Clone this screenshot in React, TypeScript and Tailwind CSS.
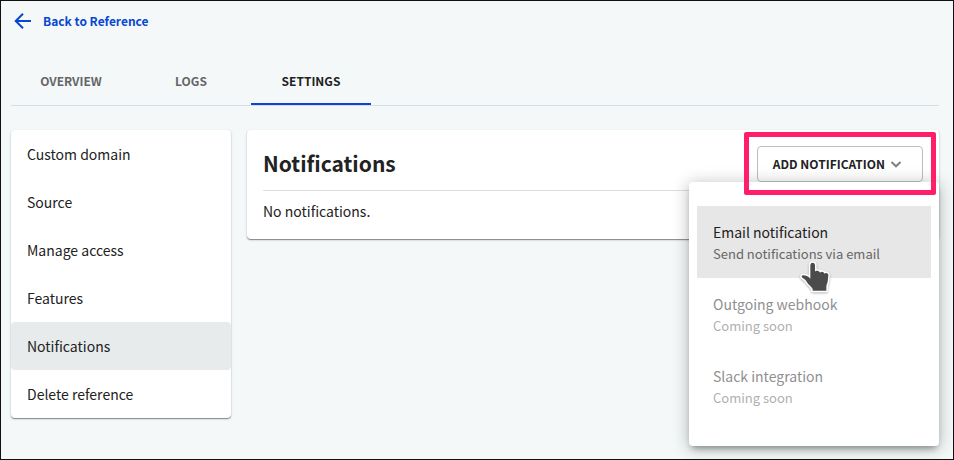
const tabs = ["Overview", "Logs", "Settings"];

const sections = [
  "Custom domain",
  "Source",
  "Manage access",
  "Features",
  "Notifications",
  "Delete reference",
];

const channels = [
  { title: "Email notification", note: "Send notifications via email", available: true },
  { title: "Outgoing webhook", note: "Coming soon", available: false },
  { title: "Slack integration", note: "Coming soon", available: false },
];

const cardShadow = "shadow-[0_1px_1px_rgba(40,50,50,0.5),0_1px_3px_rgba(40,50,50,0.16)]";

function PointerHand() {
  return (
    <svg
      className="pointer-events-none absolute left-[93px] top-[44px] size-[50px] drop-shadow-[0_1px_1px_rgba(0,0,0,0.3)]"
      viewBox="0 0 150 150"
      aria-hidden="true"
    >
      <path
        d="M61 46C61 36 75 36 75 46V65C77 61 87 61 90 68C93 63 102 64 103 71C107 67 115 69 115 76L113 95C112 101 109 104 109 110V122H68V117C66 111 55 104 50 95C47 89 43 87 38 84C33 81 34 76 40 76C47 76 55 79 61 86Z"
        fill="#4b4b4b"
        stroke="#fff"
        strokeWidth="9"
        strokeLinejoin="round"
        paintOrder="stroke"
      />
    </svg>
  );
}

function BackArrow() {
  return (
    <svg className="size-6" viewBox="0 0 24 24" fill="none" stroke="currentColor" strokeWidth="2" aria-hidden="true">
      <path d="M20 12H5M12 4.7 4.7 12 12 19.3" />
    </svg>
  );
}

function AddNotification() {
  return (
    <div className="relative">
      <button
        type="button"
        aria-haspopup="menu"
        aria-expanded="true"
        className="flex h-9 items-center gap-[5px] rounded-[4px] border border-[#bdbdbd] bg-white pl-[15px] pr-5 text-[12px] font-bold text-[#222]"
      >
        ADD NOTIFICATION
        <svg className="h-3 w-3" viewBox="0 0 12 12" fill="none" stroke="#808080" strokeWidth="2" aria-hidden="true">
          <path d="M1.5 4 6 8.3 10.5 4" />
        </svg>
      </button>

      <div
        role="menu"
        className="absolute -right-4 top-full w-[250px] rounded-[4px] bg-white px-2 py-6 shadow-[0_5px_6px_-3px_rgba(20,30,30,0.4),0_2px_16px_1px_rgba(20,30,30,0.28)]"
      >
        {channels.map((channel) => (
          <button
            key={channel.title}
            type="button"
            role="menuitem"
            disabled={!channel.available}
            className={`relative flex h-[72px] w-full flex-col justify-center px-4 text-left ${
              channel.available ? "bg-[#e7e7e7] text-[#212121]" : "text-[#909090]"
            }`}
          >
            <span className="text-[14px] leading-6">{channel.title}</span>
            <span
              className={`text-[13px] leading-5 ${channel.available ? "text-[#666]" : "text-[#b0b0b0]"}`}
            >
              {channel.note}
            </span>
            {channel.available && <PointerHand />}
          </button>
        ))}
      </div>

      <div className="pointer-events-none absolute -inset-[13px] -top-[14px] rounded-[2px] border-5 border-[#ff1f68]" />
    </div>
  );
}

export default function App() {
  return (
    <div className="min-h-screen border border-[#111] bg-[#f4f8f9] pl-[10px] pr-[14px] font-['Noto_Sans_CJK_SC',sans-serif] text-[14px] text-[#222]">
      <a href="#reference" className="flex h-10 w-fit items-center gap-2 text-[12px] font-bold text-[#0a47d1]">
        <BackArrow />
        Back to Reference
      </a>

      <nav className="mt-4 flex h-[49px] border-b border-[#d5dde8]">
        {tabs.map((tab) => (
          <a
            key={tab}
            href={`#${tab.toLowerCase()}`}
            className={`flex w-[120px] items-center justify-center border-b-2 pt-[2px] text-[12px] font-bold uppercase ${
              tab === "Settings" ? "border-[#0a47d1] text-[#222]" : "border-transparent text-[#666]"
            }`}
          >
            {tab}
          </a>
        ))}
      </nav>

      <div className="mt-6 flex items-start gap-4">
        <nav className={`w-[220px] shrink-0 rounded-[4px] bg-white ${cardShadow}`}>
          {sections.map((section) => (
            <a
              key={section}
              href={`#${section.toLowerCase().replace(" ", "-")}`}
              className={`flex h-12 items-center rounded-[4px] px-4 ${
                section === "Notifications" ? "bg-[#e7ebec]" : ""
              }`}
            >
              {section}
            </a>
          ))}
        </nav>

        <main className={`min-w-0 flex-1 rounded-[4px] bg-white p-4 ${cardShadow}`}>
          <div className="flex items-start justify-between border-b border-[#dedede] pb-2">
            <h1 className="text-[21px] font-bold leading-[34px]">Notifications</h1>
            <AddNotification />
          </div>
          <p className="pt-2 leading-6">No notifications.</p>
        </main>
      </div>
    </div>
  );
}
